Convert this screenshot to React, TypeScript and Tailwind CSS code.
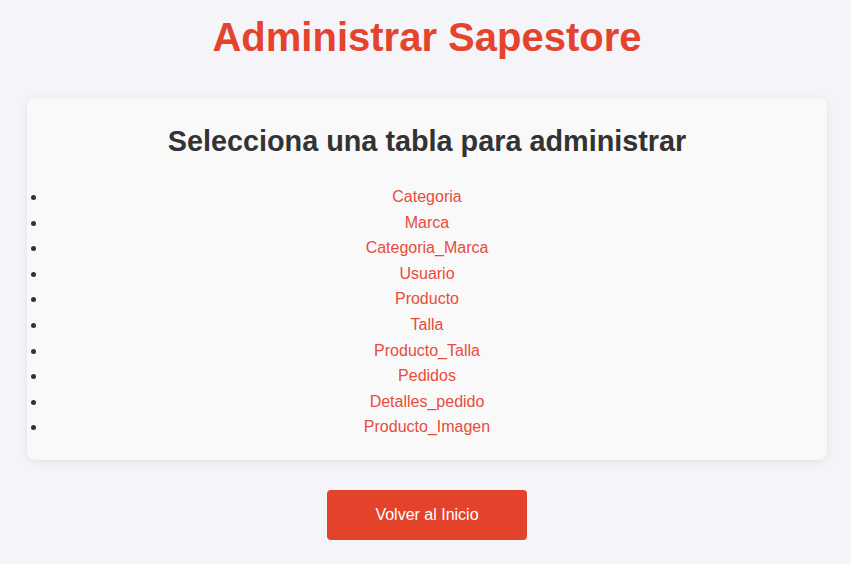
import React from 'react';

const TABLAS = [
  'Categoria',
  'Marca',
  'Categoria_Marca',
  'Usuario',
  'Producto',
  'Talla',
  'Producto_Talla',
  'Pedidos',
  'Detalles_pedido',
  'Producto_Imagen',
];

export default function App() {
  return (
    <div
      className="min-h-[564px] bg-[#f4f4f9] pl-[27px] pt-[5px] pb-6 text-[#333] leading-[1.6]"
      style={{ fontFamily: '"Liberation Sans", Arial, sans-serif' }}
    >
      <div className="w-[800px]">
        <h1 className="text-center text-[40px] font-bold leading-[64px] text-[#e4432d]">
          Administrar Sapestore
        </h1>

        <div className="mt-[29px] rounded-lg bg-[#f9f9f9] p-5 shadow-[0_2px_10px_rgba(0,0,0,0.08)]">
          <h2 className="mb-[20px] text-center text-[28.8px] font-bold leading-[46px] text-[#333]">
            Selecciona una tabla para administrar
          </h2>
          <ul className="list-disc pl-0">
            {TABLAS.map((t) => (
              <li key={t} className="text-center text-base leading-[25.6px]">
                <a href="#" className="text-[#e74c3c]">
                  {t}
                </a>
              </li>
            ))}
          </ul>
        </div>

        <div className="mt-[30px] flex justify-center">
          <a
            href="#"
            className="flex h-[50px] w-[200px] items-center justify-center rounded bg-[#e4432b] text-base text-white"
          >
            Volver al Inicio
          </a>
        </div>
      </div>
    </div>
  );
}
